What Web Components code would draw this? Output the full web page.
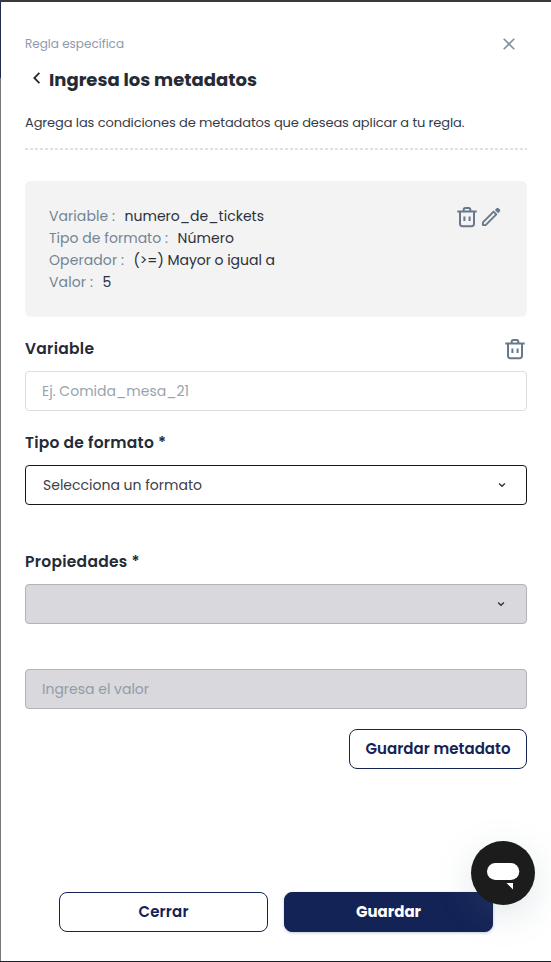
<!DOCTYPE html>
<html lang="es">
<head>
<meta charset="utf-8">
<title>Ingresa los metadatos</title>
<style>
html, body { margin: 0; height: 100%; overflow: hidden; }
body { font-family: Poppins, Inter, "Open Sans", sans-serif; color: #252b36; background: #fff; }
</style>
</head>
<body>
<metadata-panel></metadata-panel>
<script>
const define = (name, html, setup) => customElements.define(name, class extends HTMLElement {
  connectedCallback() {
    if (this.shadowRoot) return;
    const root = this.attachShadow({ mode: 'open' });
    root.innerHTML = html;
    if (setup) setup(this, root);
  }
});

// A single line of text whose tracking is adjusted to a given width.
define('fit-text', `<style>
  :host { display: block; flex: none; white-space: pre; width: max-content; }
  span { display: inline-block; }
</style><span></span>`, (host, root) => {
  const span = root.querySelector('span');
  span.textContent = host.getAttribute('text');
  const want = Number(host.getAttribute('w'));
  const count = span.textContent.length;
  host.style.width = want + 'px';
  if (count > 1) {
    const have = span.getBoundingClientRect().width;
    span.style.letterSpacing = ((want - have) / (count - 1)).toFixed(3) + 'px';
  }
});

const icons = {
  trash: [24, '<path d="M2.3 6.6h19.4M8.7 6.3V4.6a1.6 1.6 0 0 1 1.6-1.6h3.4a1.6 1.6 0 0 1 1.6 1.6v1.7M5 7v12a2.2 2.2 0 0 0 2.2 2.2h9.6A2.2 2.2 0 0 0 19 19V7M9.4 11.4v4.7M14.6 11.4v4.7" fill="none" stroke="currentColor" stroke-width="2"/>'],
  pencil: [24, '<path d="M3.9 20.1v-2.7L14.6 6.7l2.7 2.7L6.6 20.1z" fill="none" stroke="currentColor" stroke-width="1.9" stroke-linejoin="round"/><path d="m15.9 4.9 1.6-1.6a1.4 1.4 0 0 1 2 0l1.3 1.3a1.4 1.4 0 0 1 0 2L19.2 8.2z" fill="currentColor"/>'],
  close: [14, '<path d="m1.7 1.7 10.6 10.6M12.3 1.7 1.7 12.3" fill="none" stroke="currentColor" stroke-width="1.6"/>'],
  back: [14, '<path d="M10.4 1.8 5.3 7l5.1 5.2" fill="none" stroke="currentColor" stroke-width="1.8"/>'],
  down: [8, '<path d="M1.1 2.6 4 5.3l2.9-2.7" fill="none" stroke="currentColor" stroke-width="1.4"/>']
};
define('ui-icon', `<style>:host { display: block; flex: none; color: #66788a; } svg { display: block; }</style><div></div>`, (host, root) => {
  const [size, body] = icons[host.getAttribute('name')];
  root.querySelector('div').innerHTML = `<svg width="${size}" height="${size}" viewBox="0 0 ${size} ${size}">${body}</svg>`;
});

define('data-row', `<style>
  :host { display: flex; gap: 9.5px; height: 22px; line-height: 22px; font-size: 14px; color: #2b303a; }
  ::slotted([slot=key]) { color: #748493; }
</style><slot name="key"></slot><slot></slot>`);

define('form-box', `<style>
  :host { display: flex; align-items: center; justify-content: space-between; box-sizing: border-box; height: 40px;
    padding: 0 20px 0 16px; border: 1px solid #dadde2; border-radius: 4px; font-size: 14px; line-height: 20px; color: #98a3ae; }
  :host([kind=select]) { border-color: #17181b; padding-left: 17px; color: #3b4049; }
  :host([kind=disabled]) { border-color: #b3b3b7; background: #d8d8dd; padding-right: 21px; color: #929ca6; }
</style><slot></slot>`);

define('ui-button', `<style>
  :host { display: flex; align-items: center; justify-content: center; box-sizing: border-box; height: 40px; border: 1px solid #142356;
    border-radius: 8px; color: #142356; font-size: 15px; font-weight: 600; line-height: 24px; }
  :host([primary]) { background: #142356; color: #fff; box-shadow: 0 1px 3px #14235640; font-weight: 700; }
</style><slot></slot>`);

define('chat-launcher', `<style>
  :host { position: absolute; left: 471px; top: 839px; width: 64px; height: 64px; border-radius: 50%; background: #1c1c1c;
    box-shadow: 0 10px 36px #5a78832e; }
  svg { display: block; }
</style><svg width="64" height="64" viewBox="0 0 64 64"><rect x="16" y="22" width="32.3" height="17" rx="8.5" fill="#fff"/><path d="M35.5 42H42v6.5z" fill="#fff"/></svg>`);

define('metadata-panel', `<style>
  :host { display: flex; flex-direction: column; position: relative; box-sizing: border-box; height: 962px; padding: 0 24px 0 25px;
    border-top: 2px solid #3a3839; border-bottom: 1px solid #202125;
    background: linear-gradient(#202950 0 76px, #777779 76px) 0 0 / 1px 100% no-repeat #fff; }
  .top { display: flex; justify-content: space-between; height: 20px; margin-top: 32px; padding-right: 11px; align-items: center; line-height: 20px; font-size: 12px; color: #8e9aaa; }
  .top ui-icon { color: #8191a0; }
  .title { display: flex; align-items: center; height: 28px; margin-top: 12px; padding-left: 4px; gap: 6px; font-size: 18px; font-weight: 700; line-height: 28px; }
  .title ui-icon { color: #252b36; margin-top: -4px; }
  .description { margin-top: 19px; height: 20px; line-height: 20px; font-size: 13px; color: #353b45; }
  .rule { height: 2px; margin-top: 15px; background: repeating-linear-gradient(90deg, #e1e1e3 0 3px, transparent 3px 5px); }
  .card { display: flex; justify-content: space-between; box-sizing: border-box; height: 136px; margin-top: 31px; padding: 24px; border-radius: 6px; background: #f3f3f3; }
  .icons { display: flex; }
  .label { display: flex; justify-content: space-between; align-items: center; height: 24px; line-height: 24px; font-size: 15.5px; font-weight: 600; }
  .save { width: 178px; margin: 20px 0 0 auto; }
  .footer { display: grid; grid-template-columns: 1fr 1fr; gap: 16px; margin-top: 123px; padding: 0 34px; }
</style>
<div class="top"><fit-text text="Regla específica" w="99"></fit-text><ui-icon name="close"></ui-icon></div>
<div class="title"><ui-icon name="back"></ui-icon><fit-text text="Ingresa los metadatos" w="208"></fit-text></div>
<div class="description"><fit-text text="Agrega las condiciones de metadatos que deseas aplicar a tu regla." w="439.5"></fit-text></div>
<div class="rule"></div>
<div class="card">
  <div>
    <data-row><fit-text slot="key" text="Variable :" w="66"></fit-text><fit-text text="numero_de_tickets" w="139.5"></fit-text></data-row>
    <data-row><fit-text slot="key" text="Tipo de formato :" w="119"></fit-text><fit-text text="Número" w="56.5"></fit-text></data-row>
    <data-row><fit-text slot="key" text="Operador :" w="75"></fit-text><fit-text text="(&gt;=) Mayor o igual a" w="141.5"></fit-text></data-row>
    <data-row><fit-text slot="key" text="Valor :" w="44"></fit-text><fit-text text="5" w="9"></fit-text></data-row>
  </div>
  <div class="icons"><ui-icon name="trash"></ui-icon><ui-icon name="pencil"></ui-icon></div>
</div>
<div class="label" style="margin-top:20px"><fit-text text="Variable" w="69"></fit-text><ui-icon name="trash"></ui-icon></div>
<form-box style="margin-top:10px"><fit-text text="Ej. Comida_mesa_21" w="147"></fit-text></form-box>
<div class="label" style="margin-top:20px"><fit-text text="Tipo de formato *" w="141"></fit-text></div>
<form-box kind="select" style="margin-top:10px"><fit-text text="Selecciona un formato" w="159"></fit-text><ui-icon name="down" style="color:#333"></ui-icon></form-box>
<div class="label" style="margin-top:45px"><fit-text text="Propiedades *" w="114.5"></fit-text></div>
<form-box kind="disabled" style="margin-top:10px"><span></span><ui-icon name="down" style="color:#333"></ui-icon></form-box>
<form-box kind="disabled" style="margin-top:45px"><fit-text text="Ingresa el valor" w="107"></fit-text></form-box>
<ui-button class="save"><fit-text text="Guardar metadato" w="145"></fit-text></ui-button>
<div class="footer">
  <ui-button><fit-text text="Cerrar" w="50"></fit-text></ui-button>
  <ui-button primary><fit-text text="Guardar" w="65"></fit-text></ui-button>
</div>
<chat-launcher></chat-launcher>`);
</script>
</body>
</html>
